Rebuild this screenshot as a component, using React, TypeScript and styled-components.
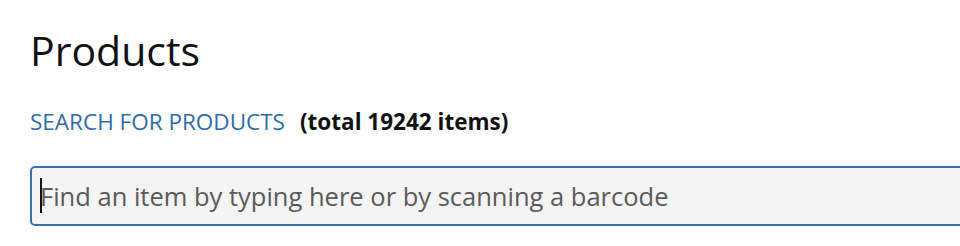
import styled, { createGlobalStyle } from "styled-components";

const GlobalStyle = createGlobalStyle`
  html, body {
    margin: 0;
    padding: 0;
    background: #ffffff;
    overflow: hidden;
  }
  body {
    font-family: "Open Sans", "Noto Sans", sans-serif;
  }
`;

const Page = styled.div`
  width: 960px;
  height: 246px;
  padding: 18px 0 0 30px;
  box-sizing: border-box;
`;

const Title = styled.h1`
  margin: 0;
  font-size: 41px;
  font-weight: 400;
  line-height: 64px;
  color: #111111;
`;

const SearchLine = styled.div`
  display: flex;
  align-items: baseline;
  gap: 15px;
  margin-top: 26px;
  line-height: 28px;
`;

const SearchLabel = styled.span`
  font-size: 22.5px;
  color: #2f6aa7;
`;

const Total = styled.span`
  font-size: 22.5px;
  font-weight: 700;
  color: #111111;
`;

const Field = styled.div`
  position: relative;
  margin-top: 30px;
  width: 960px;
`;

const SearchInput = styled.input`
  display: block;
  width: 100%;
  height: 60px;
  box-sizing: border-box;
  padding: 0 0 0 8px;
  border: 2px solid #3b6fb1;
  border-radius: 5px;
  background: #f4f4f4;
  font-family: "Open Sans", "Noto Sans", sans-serif;
  font-size: 25.5px;
  color: #222222;
  caret-color: transparent;
  outline: none;

  &::placeholder {
    color: #5a5a5a;
    opacity: 1;
  }
`;

const Caret = styled.span`
  position: absolute;
  left: 10px;
  top: 12px;
  width: 2px;
  height: 35px;
  background: #111111;
`;

export default function App() {
  return (
    <>
      <GlobalStyle />
      <Page>
        <Title>Products</Title>
        <SearchLine>
          <SearchLabel>SEARCH FOR PRODUCTS</SearchLabel>
          <Total>(total 19242 items)</Total>
        </SearchLine>
        <Field>
          <SearchInput placeholder="Find an item by typing here or by scanning a barcode" />
          <Caret />
        </Field>
      </Page>
    </>
  );
}
